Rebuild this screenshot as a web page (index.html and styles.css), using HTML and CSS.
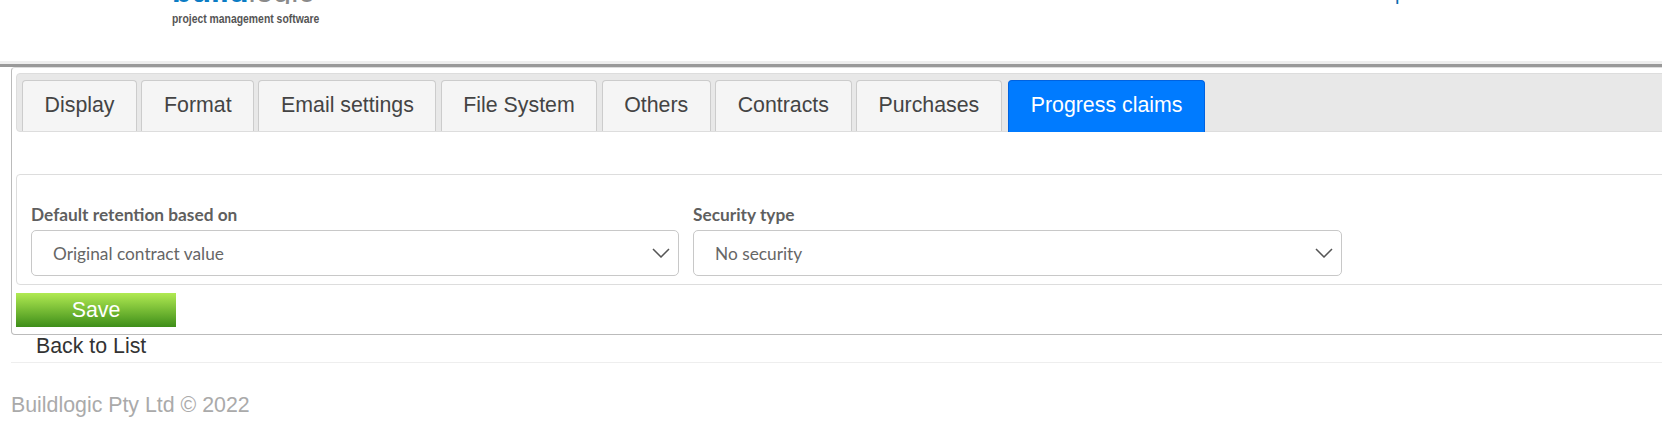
FILE: index.html
```html
<!DOCTYPE html>
<html lang="en">
<head>
    <meta charset="UTF-8">
    <meta name="viewport" content="width=device-width, initial-scale=1.0">
    <title>Settings</title>
    <link rel="stylesheet" href="styles.css">
</head>
<body>
    <header class="site-header">
        <div class="logo">
            <div class="logo-name"><span class="logo-build">build</span><span class="logo-logic">logic</span></div>
            <div class="logo-tag">project management software</div>
        </div>
        <a class="user-link" href="#">p</a>
    </header>

    <div class="panel">
        <ul class="tabs">
            <li class="tab">Display</li>
            <li class="tab">Format</li>
            <li class="tab">Email settings</li>
            <li class="tab">File System</li>
            <li class="tab">Others</li>
            <li class="tab">Contracts</li>
            <li class="tab">Purchases</li>
            <li class="tab active">Progress claims</li>
        </ul>

        <div class="fieldset">
            <div class="field">
                <label for="retention">Default retention based on</label>
                <select id="retention">
                    <option>Original contract value</option>
                </select>
            </div>
            <div class="field">
                <label for="security">Security type</label>
                <select id="security">
                    <option>No security</option>
                </select>
            </div>
        </div>

        <button class="btn-save">Save</button>
    </div>

    <a class="back-link" href="#">Back to List</a>
    <hr class="footer-rule">
    <footer class="site-footer">Buildlogic Pty Ltd © 2022</footer>
</body>
</html>
```

FILE: styles.css
```css
html, body {
    overflow-x: hidden;
}
body {
    font-family: "Liberation Sans", Arial, sans-serif;
    font-size: 21.33px;
    margin: 0;
    background-color: #ffffff;
    color: #333;
}
.site-header {
    height: 61px;
    overflow: hidden;
    display: flex;
    justify-content: space-between;
    border-bottom: 3px solid #eeeeee;
    box-shadow: 0 3px 0 #999999;
    margin-bottom: 3px;
    padding: 0 256px 0 172px;
}
.logo {
    margin-top: -27px;
}
.logo-name {
    font-size: 32px;
    line-height: 37px;
    height: 31px;
    width: 150px;
    overflow: hidden;
    white-space: nowrap;
}
.logo-build {
    color: #0b7cc4;
    font-weight: bold;
}
.logo-logic {
    color: #8a8a8a;
}
.logo-tag {
    font-size: 13px;
    font-weight: bold;
    line-height: 14px;
    margin-top: 8px;
    width: 150px;
    color: #555555;
    white-space: nowrap;
    transform: scaleX(0.8);
    transform-origin: left;
}
.user-link {
    font-size: 20px;
    line-height: 20px;
    margin-top: -17px;
    color: #0a6db0;
    text-decoration: none;
}
.panel {
    margin-left: 11px;
    margin-right: -10px;
    padding: 5px 0 7px 4px;
    border: 1px solid #bbbbbb;
    border-top-color: #dddddd;
    border-radius: 4px;
}
.tabs {
    display: flex;
    gap: 4.3px;
    list-style: none;
    margin: 0;
    height: 51px;
    padding: 6px 0 0 5px;
    background-color: #e8e8e8;
    border: 1px solid #dddddd;
    border-radius: 4px;
}
.tab {
    height: 50px;
    line-height: 49px;
    padding: 0 21.6px;
    background-color: #f5f5f5;
    border: 1px solid #cccccc;
    border-bottom: none;
    border-radius: 4px 4px 0 0;
    color: #444;
}
.tab.active {
    height: 51px;
    margin-left: 2px;
    background-color: #007bff;
    border-color: #0062e0;
    color: #ffffff;
}
.fieldset {
    display: flex;
    gap: 14px;
    margin-top: 42px;
    height: 109px;
    padding: 0 14px;
    border: 1px solid #dddddd;
    border-radius: 4px;
}
.field {
    width: 648px;
    padding-top: 30px;
}
.field + .field {
    width: 649px;
}
.field label {
    display: block;
    font-family: Lato, sans-serif;
    font-size: 17.3px;
    font-weight: bold;
    line-height: 20px;
    margin-bottom: 5px;
    color: #5f5f5f;
}
.field select {
    display: block;
    width: 100%;
    height: 46px;
    padding: 0 21px;
    font-family: Lato, sans-serif;
    font-size: 17.3px;
    color: #666;
    background-color: #ffffff;
    background-image: url("data:image/svg+xml,%3Csvg xmlns='http://www.w3.org/2000/svg' width='18' height='10'%3E%3Cpath d='M1 1l8 8 8-8' fill='none' stroke='%23555' stroke-width='1.5'/%3E%3C/svg%3E");
    background-repeat: no-repeat;
    background-position: right 8px center;
    border: 1px solid #c8c8c8;
    border-radius: 5px;
    appearance: none;
}
.btn-save {
    display: block;
    width: 160px;
    height: 34px;
    margin-top: 8px;
    padding: 0;
    font-family: inherit;
    font-size: 21.33px;
    color: #ffffff;
    background: linear-gradient(#b1ea52, #3e8e19);
    border: none;
}
.back-link {
    display: block;
    margin-left: 36px;
    line-height: 22px;
    color: #333;
    text-decoration: none;
}
.footer-rule {
    margin: 5px 0 0 11px;
    border: none;
    border-top: 1px solid #eeeeee;
}
.site-footer {
    margin: 30px 0 0 11px;
    line-height: 24px;
    color: #aaaaaa;
}
```
